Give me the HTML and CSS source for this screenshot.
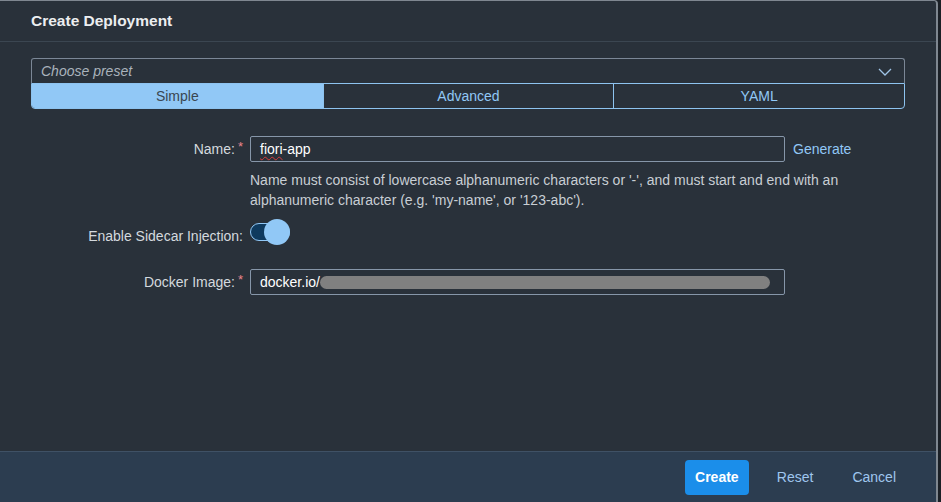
FILE: index.html
```html
<!DOCTYPE html>
<html>
<head>
<meta charset="utf-8">
<link rel="stylesheet" href="styles.css">
</head>
<body>
<div class="dialog">
  <div class="header">Create Deployment</div>
  <div class="content">
    <div class="select">
      <span class="placeholder">Choose preset</span>
      <svg class="chevron" width="14" height="8" viewBox="0 0 14 8"><polyline points="1,1 7,7 13,1" fill="none" stroke="#9fc3e6" stroke-width="1.3"/></svg>
    </div>
    <div class="tabs">
      <div class="tab active">Simple</div>
      <div class="tab">Advanced</div>
      <div class="tab">YAML</div>
    </div>
    <div class="form">
      <div class="label">Name:<span class="req">*</span></div>
      <div class="input"><span class="typo">fiori</span>-app</div>
      <div class="link">Generate</div>

      <div></div>
      <div class="help">Name must consist of lowercase alphanumeric characters or '-', and must start and end with an alphanumeric character (e.g. 'my-name', or '123-abc').</div>

      <div class="label toggle-label">Enable Sidecar Injection:</div>
      <div class="toggle-cell"><div class="toggle"><div class="knob"></div></div></div>
      <div></div>

      <div class="label docker-label">Docker Image:<span class="req">*</span></div>
      <div class="input docker-input">docker.io/<span class="blur"></span></div>
      <div></div>
    </div>
  </div>
  <div class="footer">
    <button class="btn primary">Create</button>
    <button class="btn ghost">Reset</button>
    <button class="btn ghost">Cancel</button>
  </div>
</div>
</body>
</html>
```
FILE: styles.css
```css
html, body {
  margin: 0;
  padding: 0;
  background: #1b2026;
  font-family: "Liberation Sans", Arial, sans-serif;
}
.dialog {
  width: 936px;
  height: 501px;
  background: #29313a;
  border-top: 1px solid #7f8790;
  border-right: 2px solid #7f8790;
  border-top-right-radius: 4px;
  display: flex;
  flex-direction: column;
}
.header {
  height: 40px;
  border-bottom: 1px solid #3b4651;
  padding-left: 31px;
  display: flex;
  align-items: center;
  color: #eceef0;
  font-size: 15.5px;
  font-weight: bold;
}
.content {
  flex: 1;
  padding: 16px 31px 0 31px;
}
.select {
  height: 24px;
  border: 1px solid #7b8796;
  border-bottom: none;
  border-radius: 3px 3px 0 0;
  display: flex;
  align-items: center;
  justify-content: space-between;
  padding: 0 12px 0 9px;
}
.placeholder {
  color: #aab3bc;
  font-style: italic;
  font-size: 14px;
}
.chevron {
  margin-top: 2px;
}
.tabs {
  display: grid;
  grid-template-columns: 1fr 1fr 1fr;
  height: 24px;
  border: 1px solid #8dc3ef;
  border-radius: 0 0 4px 4px;
  overflow: hidden;
}
.tab {
  display: flex;
  align-items: center;
  justify-content: center;
  color: #91c8f6;
  font-size: 14px;
  border-left: 1px solid #8dc3ef;
}
.tab:first-child {
  border-left: none;
}
.tab.active {
  background: #91c8f6;
  color: #3a4651;
}
.form {
  display: grid;
  grid-template-columns: 211px 535px auto;
  column-gap: 8px;
  margin-top: 27px;
  align-items: center;
}
.label {
  justify-self: end;
  color: #d4d9de;
  font-size: 14px;
  white-space: nowrap;
  margin-right: -1px;
}
.req {
  color: #e9848c;
  font-size: 13px;
  margin-left: 3px;
  position: relative;
  top: -3px;
}
.input {
  height: 24px;
  border: 1px solid #8696a9;
  border-radius: 2px;
  background: #29313a;
  display: flex;
  align-items: center;
  padding-left: 9px;
  color: #ffffff;
  font-size: 14px;
}
.typo {
  text-decoration: underline wavy #d83a3a;
  text-decoration-thickness: 1px;
  text-underline-offset: 2px;
}
.link {
  color: #91c8f6;
  font-size: 14px;
}
.help {
  grid-column: 2 / 4;
  color: #c8ced4;
  font-size: 14px;
  line-height: 20px;
  margin-top: 8px;
  width: 600px;
}
.toggle-label {
  align-self: end;
  margin-bottom: 1px;
}
.toggle-cell {
  margin-top: 9px;
  height: 26px;
  display: flex;
  align-items: center;
}
.toggle {
  width: 38px;
  height: 16px;
  border: 1px solid #91c8f6;
  border-radius: 9px;
  background: #0f3a5e;
  position: relative;
}
.knob {
  position: absolute;
  width: 26px;
  height: 26px;
  border-radius: 50%;
  background: #91c8f6;
  left: 13px;
  top: -5px;
}
.docker-label {
  margin-top: 23px;
}
.docker-input {
  margin-top: 24px;
}
.blur {
  display: inline-block;
  width: 450px;
  height: 13px;
  border-radius: 7px;
  background: #808080;
  margin-left: 0;
}
.footer {
  height: 50px;
  border-top: 1px solid #3f5165;
  background: #2c3d50;
  display: flex;
  justify-content: flex-end;
  align-items: center;
  padding-right: 28px;
  gap: 0;
}
.btn {
  font-family: "Liberation Sans", Arial, sans-serif;
  font-size: 14px;
  border: none;
  background: transparent;
  color: #9fc6ee;
  height: 35px;
  padding: 0 12px;
  border-radius: 4px;
  margin-left: 4px;
}
.btn.primary {
  background: #1b8eea;
  color: #ffffff;
  font-weight: bold;
  width: 64px;
  padding: 0;
}
.btn.ghost {
  margin-left: 16px;
}
.btn.ghost + .btn.ghost {
  margin-left: 15px;
}
```
